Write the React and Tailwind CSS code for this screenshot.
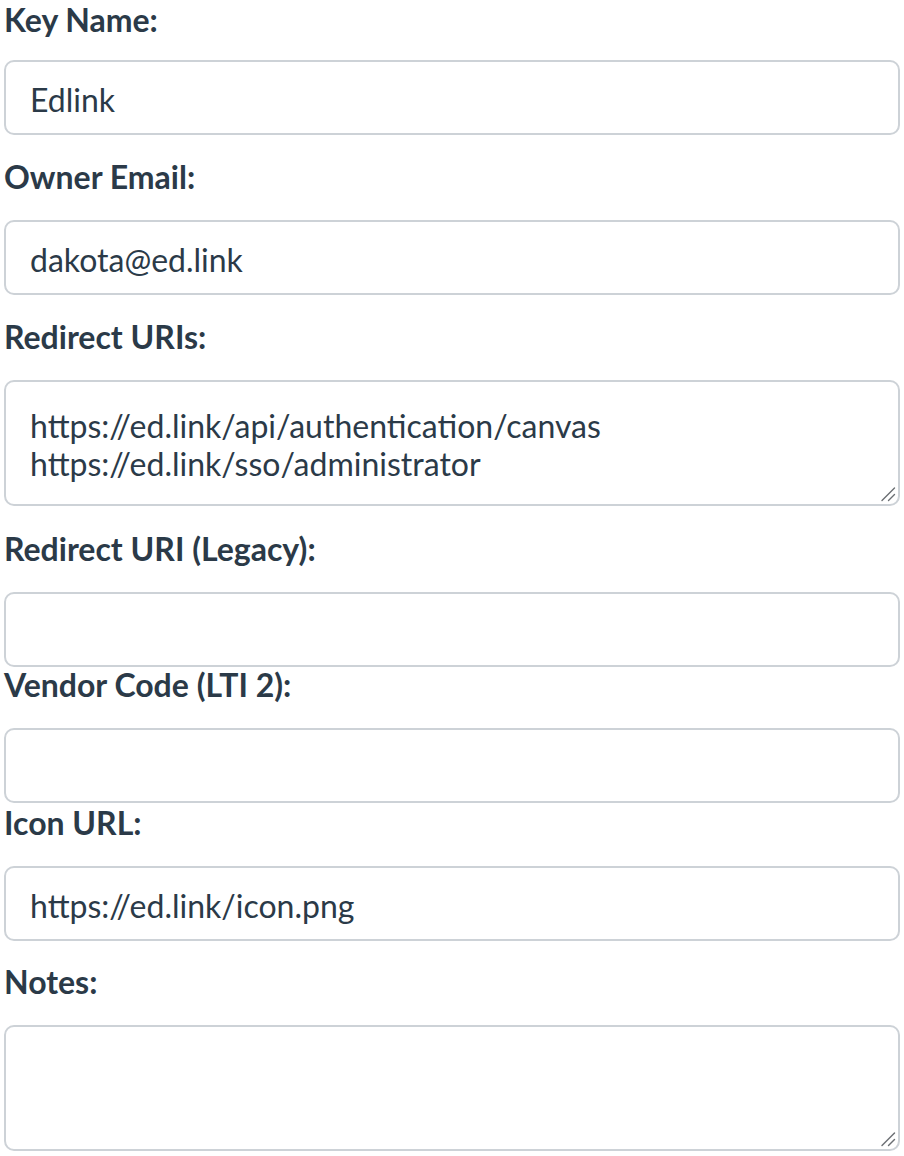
import React from "react";

const fields = [
  { label: "Key Name:", value: "Edlink", mb: "mb-[22px]", lmb: "mb-[20px]" },
  { label: "Owner Email:", value: "dakota@ed.link", mb: "mb-[22px]" },
  {
    label: "Redirect URIs:",
    value: "https://ed.link/api/authentication/canvas\nhttps://ed.link/sso/administrator",
    area: true,
    mb: "mb-[23px]",
  },
  { label: "Redirect URI (Legacy):", value: "", mb: "-mb-[2px]" },
  { label: "Vendor Code (LTI 2):", value: "", mb: "mb-0" },
  { label: "Icon URL:", value: "https://ed.link/icon.png", mb: "mb-[21px]" },
  { label: "Notes:", value: "", area: true, mb: "mb-0" },
];

function ResizeGrip() {
  return (
    <svg
      width="16"
      height="16"
      viewBox="0 0 16 16"
      className="absolute right-[4px] bottom-[4px] pointer-events-none"
    >
      <path d="M2 14.5 L14.5 2" stroke="#6b6f73" strokeWidth="1.4" strokeLinecap="round" />
      <path d="M8.5 14.5 L14.5 8.5" stroke="#6b6f73" strokeWidth="1.4" strokeLinecap="round" />
    </svg>
  );
}

export default function App() {
  return (
    <div className="bg-white px-[4px] text-[#2b3a48] font-['Lato','Noto_Sans',sans-serif]">
      {fields.map((f) => (
        <div key={f.label} className={f.mb}>
          <label className={`block text-[32px] font-bold leading-[40px] ${f.lmb || "mb-[23px]"}`}>
            {f.label}
          </label>
          {f.area ? (
            <div className="relative">
              <textarea
                defaultValue={f.value}
                rows={2}
                className="block w-full h-[126px] border-2 border-[#cdd2d7] rounded-[10px] px-[24px] pt-[25px] pb-[15px] text-[32px] leading-[38px] resize-none outline-none"
              />
              <ResizeGrip />
            </div>
          ) : (
            <input
              defaultValue={f.value}
              className="block w-full h-[75px] border-2 border-[#cdd2d7] rounded-[10px] px-[24px] pt-[4px] text-[32px] outline-none"
            />
          )}
        </div>
      ))}
    </div>
  );
}
